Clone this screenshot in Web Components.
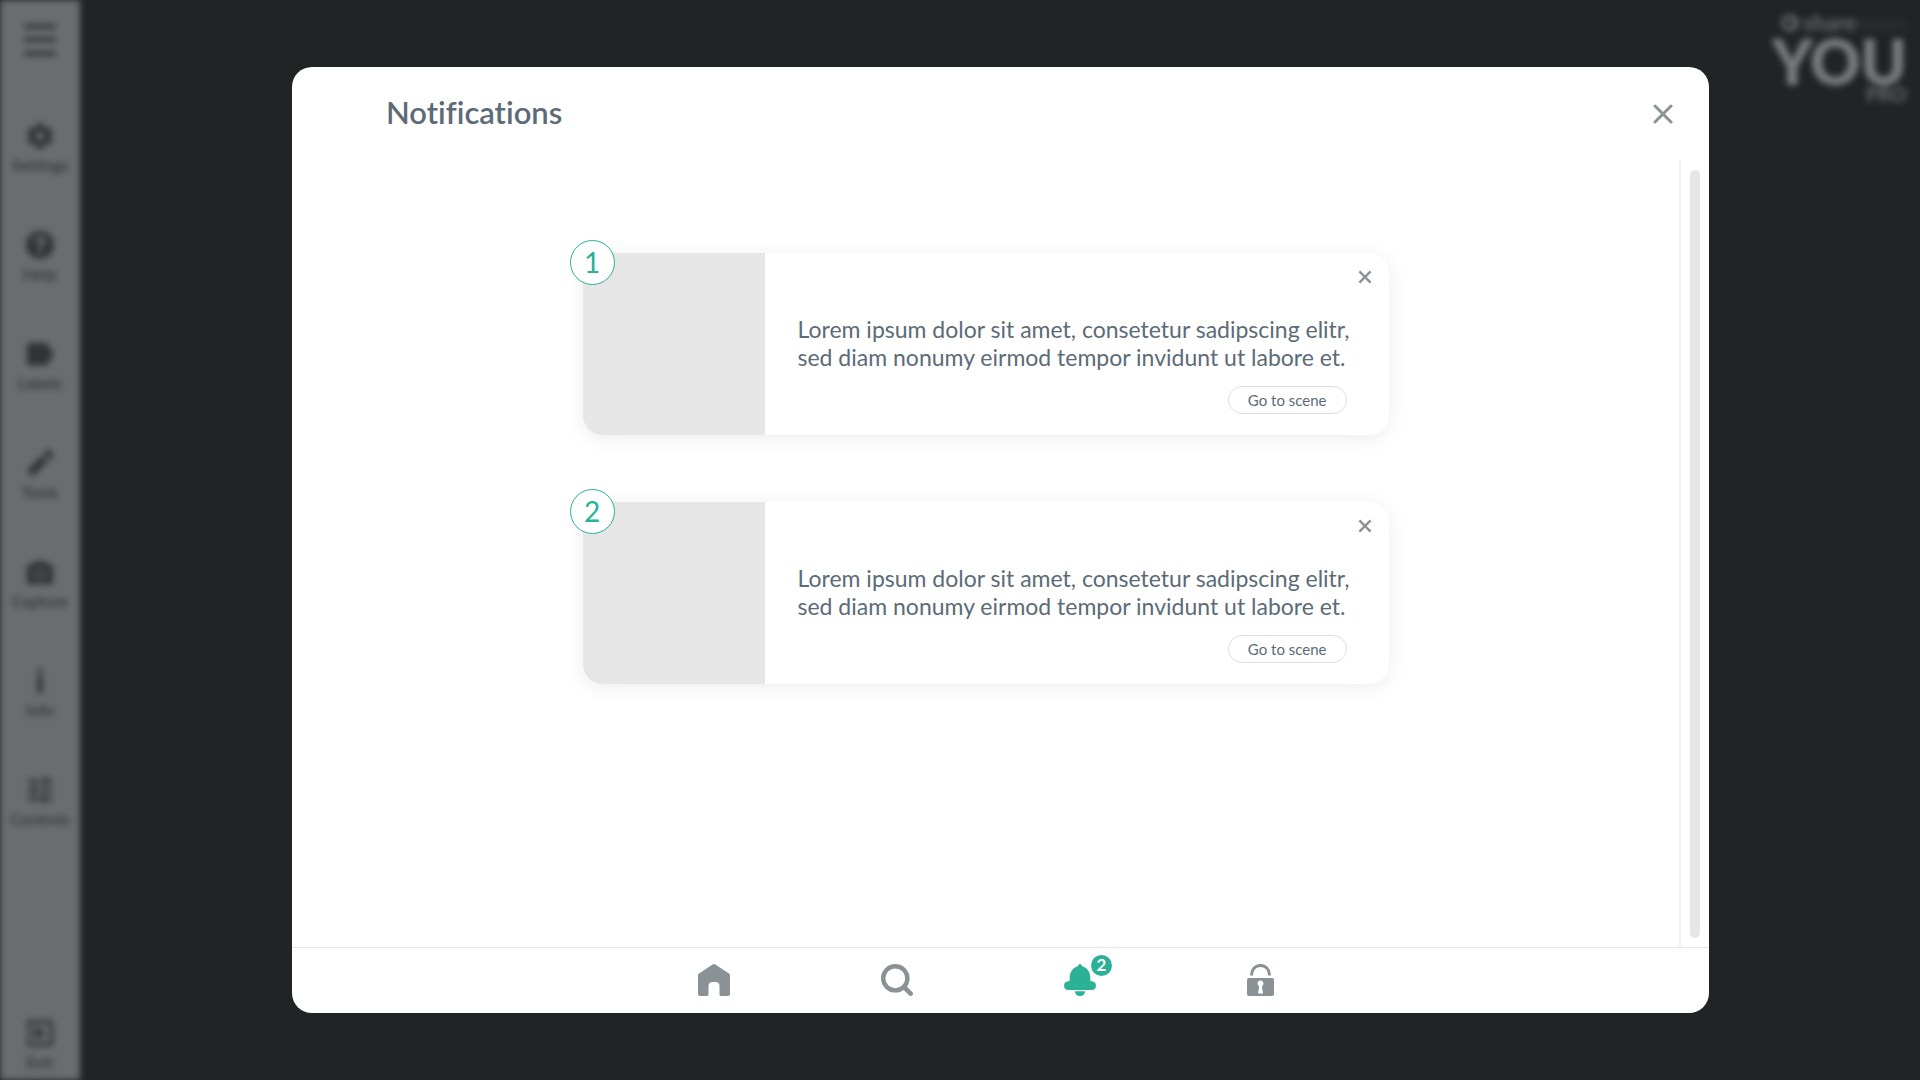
<!DOCTYPE html>
<html lang="en">
<head>
<meta charset="utf-8">
<title>Notifications</title>
<style>
  html, body {
    margin: 0;
    min-height: 100vh;
    background: #202425;
  }
  body {
    font-family: Lato, "Open Sans", sans-serif;
    font-variant-ligatures: none;
    color: #5c6b77;
    --green: #2bb195;
    --grey: #8a9296;
    --line: #e6e6e6;
  }
</style>
</head>
<body>
<app-shell>
  <side-bar slot="side">
    <side-item icon="settings">Settings</side-item>
    <side-item icon="help">Help</side-item>
    <side-item icon="labels">Labels</side-item>
    <side-item icon="tools">Tools</side-item>
    <side-item icon="capture">Capture</side-item>
    <side-item icon="info">Info</side-item>
    <side-item icon="controls">Controls</side-item>
    <side-item icon="exit" slot="end">Exit</side-item>
  </side-bar>
  <brand-logo slot="logo"></brand-logo>
  <modal-window>
    <span slot="title">Notifications</span>
    <notification-card number="1">Lorem ipsum dolor sit amet, consetetur sadipscing elitr, sed diam nonumy eirmod tempor invidunt ut labore et.</notification-card>
    <notification-card number="2">Lorem ipsum dolor sit amet, consetetur sadipscing elitr, sed diam nonumy eirmod tempor invidunt ut labore et.</notification-card>
    <modal-nav slot="footer" count="2"></modal-nav>
  </modal-window>
</app-shell>

<script>
const resetButton = `
  button {
    margin: 0;
    padding: 0;
    border: 0;
    background: none;
    font: inherit;
    font-variant-ligatures: none;
    color: inherit;
    cursor: pointer;
  }
  svg { display: block; }
`;

const sideIcons = {
  settings: '<path fill-rule="evenodd" d="M13 1h6l1 4 3 2 4-1 4 6-3 3v2l3 3-4 6-4-1-3 2-1 4h-6l-1-4-3-2-4 1-4-6 3-3v-2l-3-3 4-6 4 1 3-2zM16 11a5 5 0 1 0 0 10a5 5 0 1 0 0-10z"/>',
  help: '<path fill-rule="evenodd" d="M16 0a16 16 0 1 0 0 32a16 16 0 1 0 0-32zM14 23h4v4h-4zM10 12a6 6 0 1 1 9 5q-1 1-1 4h-4q0-5 2-6q3-3 0-5q-2 0-2 2z"/>',
  labels: '<path d="M5 3h17q2 0 3 2l7 11-7 11q-1 2-3 2H5q-4 0-4-4V7q0-4 4-4z"/>',
  tools: '<path d="M2 24l2 6 6-1L25 14l-7-7zM20 5l4-4q2-1 4 1l3 3q1 2 0 3l-4 4z"/>',
  capture: '<path fill-rule="evenodd" d="M11 3h10l3 4h4q3 0 3 3v17q0 3-3 3H4q-3 0-3-3V10q0-3 3-3h4zM16 11a7 7 0 1 0 0 14a7 7 0 1 0 0-14z"/><circle cx="16" cy="18" r="5"/>',
  info: '<circle cx="16" cy="4" r="3"/><path d="M13 10h6v20h-6z"/>',
  controls: '<path d="M2 4h15v4H2zM20 1h4v10h-4zM24 4h6v4h-6zM2 14h6v4H2zM8 11h4v10H8zM15 14h15v4H15zM2 24h14v4H2zM18 21h4v10h-4zM22 24h8v4h-8z"/>',
  exit: '<path fill-rule="evenodd" d="M4 1h24q3 0 3 3v24q0 3-3 3H4q-3 0-3-3v-7h4v6h22V5H5v6H1V4q0-3 3-3z"/><path d="M14 8l8 8-8 8-3-3 3-3H1v-4h13l-3-3z"/>'
};

class AppShell extends HTMLElement {
  constructor() {
    super();
    this.attachShadow({mode: 'open'}).innerHTML = `
      <style>
        :host {
          display: flex;
          min-height: 100vh;
          position: relative;
        }
        main {
          flex: 1;
          display: flex;
          box-sizing: border-box;
          padding: 67px 211px 67px 212px;
        }
        .logo {
          position: absolute;
          top: 10px;
          right: 13px;
        }
      </style>
      <slot name="side"></slot>
      <main><slot></slot></main>
      <div class="logo"><slot name="logo"></slot></div>`;
  }
}

class SideBar extends HTMLElement {
  constructor() {
    super();
    this.attachShadow({mode: 'open'}).innerHTML = `
      <style>
        ${resetButton}
        :host {
          display: flex;
          flex-direction: column;
          align-items: center;
          box-sizing: border-box;
          width: 80px;
          padding: 24px 0 8px;
          background: #696d6d;
          color: #303434;
          filter: blur(3px);
        }
        .menu { margin-bottom: 64px; }
        nav {
          flex: 1;
          display: flex;
          flex-direction: column;
          gap: 54px;
        }
      </style>
      <button class="menu" aria-label="Menu">
        <svg width="32" height="32" viewBox="0 0 32 32" fill="#383c3c"><path d="M0 0h32v5H0zM0 13h32v5H0zM0 27h32v5H0z"/></svg>
      </button>
      <nav><slot></slot></nav>
      <slot name="end"></slot>`;
  }
}

class SideItem extends HTMLElement {
  constructor() {
    super();
    this.attachShadow({mode: 'open'}).innerHTML = `
      <style>
        ${resetButton}
        :host { display: block; }
        button {
          display: flex;
          flex-direction: column;
          align-items: center;
          gap: 3px;
          width: 80px;
          font-size: 16px;
          font-weight: 600;
          line-height: 20px;
        }
      </style>
      <button>
        <svg width="28" height="32" viewBox="0 0 32 32" fill="currentColor">${sideIcons[this.getAttribute('icon')]}</svg>
        <slot></slot>
      </button>`;
  }
}

class BrandLogo extends HTMLElement {
  constructor() {
    super();
    this.attachShadow({mode: 'open'}).innerHTML = `
      <style>
        :host {
          display: flex;
          flex-direction: column;
          align-items: flex-end;
          color: #606465;
          font-weight: 900;
          filter: blur(3px);
        }
        .top {
          display: flex;
          align-items: center;
          gap: 4px;
          font-size: 22px;
          line-height: 26px;
        }
        .top i {
          font-style: normal;
          font-weight: 400;
          color: #363a3b;
        }
        .you {
          font-size: 62px;
          font-weight: 800;
          line-height: 50px;
          color: #777b7c;
        }
        .pro {
          font-size: 20px;
          line-height: 16px;
        }
      </style>
      <div class="top">
        <svg width="18" height="18" viewBox="0 0 18 18" fill="none" stroke="currentColor" stroke-width="4"><circle cx="9" cy="9" r="7"/><path d="M9 9h7"/></svg>
        <span>share<i>room</i></span>
      </div>
      <div class="you">YOU</div>
      <div class="pro">PRO</div>`;
  }
}

class ModalWindow extends HTMLElement {
  constructor() {
    super();
    this.attachShadow({mode: 'open'}).innerHTML = `
      <style>
        ${resetButton}
        :host {
          flex: 1;
          display: flex;
          flex-direction: column;
          border-radius: 20px;
          background: #fff;
          overflow: hidden;
        }
        header {
          display: flex;
          align-items: center;
          justify-content: space-between;
          height: 93px;
          padding: 0 28px 0 94px;
        }
        h1 {
          margin: 0;
          padding-bottom: 4px;
          font-size: 31px;
          font-weight: 600;
          line-height: 36px;
        }
        .close {
          display: grid;
          place-items: center;
          width: 36px;
          height: 36px;
        }
        .body {
          flex: 1;
          display: flex;
        }
        .list {
          flex: 1;
          display: flex;
          flex-direction: column;
          align-items: center;
          gap: 67px;
          padding: 93px 24px;
        }
        .rail {
          display: flex;
          box-sizing: border-box;
          width: 30px;
          padding: 10px 9px 9px;
          border-left: 2px solid #f2f2f2;
        }
        .thumb {
          width: 10px;
          border-radius: 5px;
          background: #e6e6e6;
        }
      </style>
      <header>
        <h1><slot name="title"></slot></h1>
        <button class="close" aria-label="Close">
          <svg width="20" height="20" viewBox="0 0 20 20" fill="none" stroke="#8a9296" stroke-width="3" stroke-linecap="round"><path d="M2 2l16 16M18 2L2 18"/></svg>
        </button>
      </header>
      <div class="body">
        <div class="list"><slot></slot></div>
        <div class="rail"><div class="thumb"></div></div>
      </div>
      <slot name="footer"></slot>`;
  }
}

class NotificationCard extends HTMLElement {
  constructor() {
    super();
    this.attachShadow({mode: 'open'}).innerHTML = `
      <style>
        ${resetButton}
        :host {
          position: relative;
          display: flex;
          width: 100%;
          max-width: 806px;
          border-radius: 20px;
          background: #fff;
          box-shadow: 0 3px 20px rgba(0, 0, 0, 0.08);
        }
        .picture {
          flex: 0 0 182px;
          border-radius: 20px 0 0 20px;
          background: #e6e6e6;
        }
        .number {
          position: absolute;
          top: -13px;
          left: -13px;
          box-sizing: border-box;
          width: 45px;
          height: 45px;
          border: 1px solid var(--green);
          border-radius: 50%;
          background: #fff;
          color: var(--green);
          font-size: 28px;
          line-height: 42px;
          text-align: center;
        }
        .text {
          flex: 1;
          display: flex;
          flex-direction: column;
          padding: 62px 32px 21px 33px;
        }
        p {
          margin: 0 0 15px;
          font-size: 23px;
          line-height: 28px;
        }
        .go {
          align-self: flex-end;
          box-sizing: border-box;
          height: 28px;
          margin-right: 10px;
          padding: 0 19px;
          border: 1px solid #dedede;
          border-radius: 14px;
          font-size: 15px;
          line-height: 26px;
        }
        .close {
          position: absolute;
          top: 10px;
          right: 10px;
          display: grid;
          place-items: center;
          width: 28px;
          height: 28px;
        }
      </style>
      <div class="picture"></div>
      <div class="text">
        <p><slot></slot></p>
        <button class="go">Go to scene</button>
      </div>
      <div class="number">${this.getAttribute('number')}</div>
      <button class="close" aria-label="Dismiss">
        <svg width="14" height="14" viewBox="0 0 14 14" fill="none" stroke="#8a9296" stroke-width="2.400"><path d="M1.400 1.400l11.200 11.200M12.600 1.400L1.400 12.600"/></svg>
      </button>`;
  }
}

class ModalNav extends HTMLElement {
  constructor() {
    super();
    this.attachShadow({mode: 'open'}).innerHTML = `
      <style>
        ${resetButton}
        :host {
          display: block;
          border-top: 1px solid var(--line);
        }
        nav {
          display: flex;
          justify-content: center;
          align-items: center;
          box-sizing: border-box;
          gap: 151px;
          height: 65px;
          padding: 0 29px 1px 0;
          color: var(--grey);
        }
        .bell {
          position: relative;
          color: var(--green);
        }
        .count {
          position: absolute;
          top: -9px;
          left: 27px;
          width: 21px;
          height: 21px;
          border-radius: 50%;
          background: var(--green);
          color: #fff;
          font-size: 17px;
          font-weight: 700;
          line-height: 20px;
          text-align: center;
        }
      </style>
      <nav>
        <button aria-label="Home">
          <svg width="32" height="32" viewBox="0 0 32 32" fill="currentColor"><path d="M14.600 .5q1.400-1 2.800 0L31 9.500q1 .7 1 2V30q0 2-2 2h-7q-1.500 0-1.500-1.500V22q0-4-4-4h-3q-4 0-4 4v8.500Q10.500 32 9 32H2q-2 0-2-2V11.500q0-1.300 1-2z"/></svg>
        </button>
        <button aria-label="Search">
          <svg width="32" height="32" viewBox="0 0 32 32" fill="none" stroke="currentColor" stroke-linecap="round"><circle cx="14.300" cy="14.300" r="12.100" stroke-width="4.400"/><path d="M24 24l5.600 5.600" stroke-width="4.600"/></svg>
        </button>
        <button class="bell" aria-label="Notifications">
          <svg width="32" height="32" viewBox="0 0 32 32" fill="currentColor"><path d="M16 0q1.500 0 1.900 1.900Q26.300 5 26.300 13v4q5.700.3 5.700 4.600 0 4.400-4.500 4.400h-23Q0 26 0 21.600 0 17.300 5.700 17v-4q0-8 8.400-11.100Q14.500 0 16 0zM11 27.200h10q0 4.800-5 4.800t-5-4.800z"/></svg>
          <span class="count">${this.getAttribute('count')}</span>
        </button>
        <button aria-label="Unlock">
          <svg width="27" height="32" viewBox="0 0 27 32" fill="currentColor"><path fill-rule="evenodd" d="M2 14h23q2 0 2 2v14q0 2-2 2H2q-2 0-2-2V16q0-2 2-2zM13.500 16.500a2.900 2.900 0 0 0-1.800 5.200q.8 1.800-.7 6.800 0 1.300 2.500 1.300t2.500-1.300q-1.500-5-.7-6.800a2.900 2.900 0 0 0-1.800-5.200z"/><path d="M4.600 11.500v-1.200a8.900 8.900 0 0 1 17.800 0v1.200" fill="none" stroke="currentColor" stroke-width="3"/></svg>
        </button>
      </nav>`;
  }
}

customElements.define('app-shell', AppShell);
customElements.define('side-bar', SideBar);
customElements.define('side-item', SideItem);
customElements.define('brand-logo', BrandLogo);
customElements.define('modal-window', ModalWindow);
customElements.define('notification-card', NotificationCard);
customElements.define('modal-nav', ModalNav);
</script>
</body>
</html>
